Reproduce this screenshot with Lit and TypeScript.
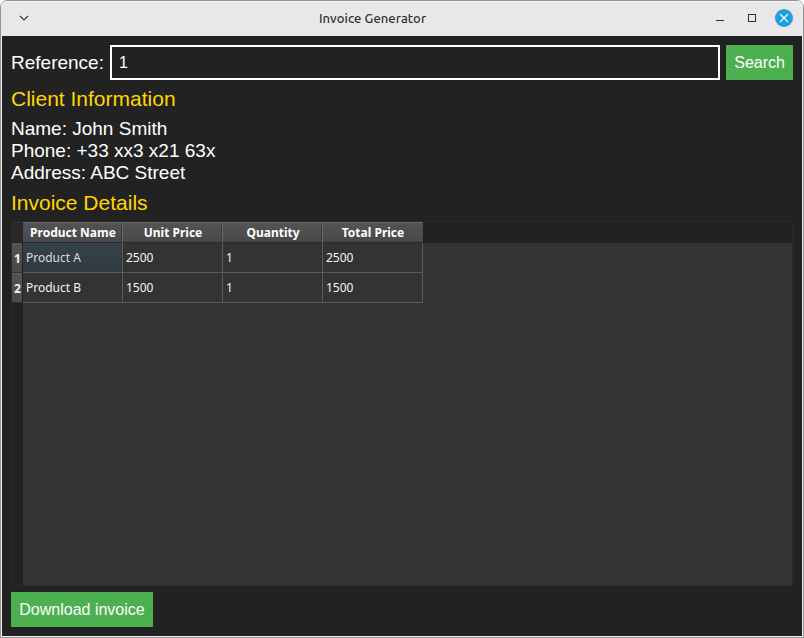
import { LitElement, html, css } from "lit";
import { customElement, state } from "lit/decorators.js";

interface InvoiceLine {
  name: string;
  price: number;
  quantity: number;
}

@customElement("title-bar")
class TitleBar extends LitElement {
  static styles = css`
    :host {
      display: grid;
      grid-template-columns: 104px 1fr 104px;
      align-items: center;
      height: 35px;
      box-sizing: border-box;
      padding-bottom: 2px;
      background: #e8e8e8;
      color: #303030;
      border-top: 1px solid #f8f8f8;
      border-radius: 6px 6px 0 0;
    }
    .menu {
      display: block;
      margin-left: 17px;
    }
    .title {
      text-align: center;
      font: 500 13px/18px Ubuntu, "Noto Sans", sans-serif;
      letter-spacing: 0.08px;
      margin-left: -59px;
      white-space: nowrap;
    }
    .buttons {
      display: block;
      margin-left: 5px;
    }
  `;

  render() {
    return html`
      <svg class="menu" width="12" height="12" viewBox="0 0 12 12" fill="none" stroke="#3a3a3a" stroke-width="1.2">
        <path d="M2 4l4 4 4-4" />
      </svg>
      <div class="title">Invoice Generator</div>
      <svg class="buttons" width="90" height="20" viewBox="0 0 90 20" fill="none">
        <path d="M12 12.5h8" stroke="#303030" />
        <rect x="44.5" y="6.5" width="7" height="7" stroke="#303030" />
        <circle cx="80" cy="10" r="9" fill="#1f9ede" />
        <path d="M76 6l8 8M84 6l-8 8" stroke="#fff" stroke-width="1.1" />
      </svg>
    `;
  }
}

@customElement("invoice-table")
class InvoiceTable extends LitElement {
  static properties = { lines: { attribute: false } };
  declare lines: InvoiceLine[];

  static styles = css`
    :host {
      display: block;
      box-sizing: border-box;
      border: 1px solid #292929;
      background: linear-gradient(90deg, #222 11px, #333 11px);
      font: 12px/17px "Noto Sans", sans-serif;
      color: #f4f4f4;
    }
    .head,
    .row {
      display: grid;
      grid-template-columns: 11px repeat(4, 100px);
    }
    .head {
      height: 21px;
      background: #222;
    }
    .corner {
      box-sizing: border-box;
      height: 21px;
      background: #292929;
      border-bottom: 1px solid #222;
      border-top: 1px solid #303030;
    }
    .column {
      box-sizing: border-box;
      height: 21px;
      padding: 1px 0 0 1px;
      text-align: center;
      font-weight: bold;
      color: #fff;
      background: linear-gradient(#535353, #484848);
      border-top: 1px solid #656565;
      border-right: 1px solid #666;
      border-bottom: 1px solid #2c2c2c;
      box-shadow: inset -1px 0 #3e3e3e;
      white-space: nowrap;
    }
    .column:last-child {
      border-right-color: #4a4a4a;
      box-shadow: none;
    }
    .row {
      height: 30px;
    }
    .number {
      box-sizing: border-box;
      width: 10px;
      padding: 6px 0 0 1px;
      text-align: center;
      font-weight: bold;
      background: linear-gradient(#535353, #494949);
      border-bottom: 1px solid #303030;
      border-top: 1px solid #5b5b5b;
    }
    .cell {
      box-sizing: border-box;
      padding: 6px 0 0 3px;
      border-right: 1px solid #5b5b5b;
      border-bottom: 1px solid #5b5b5b;
      background: #333;
    }
    .current {
      background: linear-gradient(#34424b, #303a40);
      color: #d8dcde;
    }
  `;

  render() {
    const titles = ["Product Name", "Unit Price", "Quantity", "Total Price"];
    return html`
      <div class="head">
        <div class="corner"></div>
        ${titles.map((title) => html`<div class="column">${title}</div>`)}
      </div>
      ${this.lines.map(
        (line, i) => html`
          <div class="row">
            <div class="number">${i + 1}</div>
            <div class="cell ${i === 0 ? "current" : ""}">${line.name}</div>
            <div class="cell">${line.price}</div>
            <div class="cell">${line.quantity}</div>
            <div class="cell">${line.price * line.quantity}</div>
          </div>
        `
      )}
    `;
  }
}

@customElement("app-root")
class AppRoot extends LitElement {
  @state() private lines: InvoiceLine[] = [
    { name: "Product A", price: 2500, quantity: 1 },
    { name: "Product B", price: 1500, quantity: 1 },
  ];

  static styles = css`
    :host {
      display: block;
      height: 638px;
      background: #fff;
    }
    .window {
      box-sizing: border-box;
      height: 638px;
      display: flex;
      flex-direction: column;
      border: 1px solid #949494;
      border-radius: 7px 7px 0 0;
      background: #f4f4f4;
    }
    title-bar {
      flex: none;
    }
    .body {
      box-sizing: border-box;
      flex: 1;
      margin: 0 1px 1px;
      padding: 9px 9px;
      display: flex;
      flex-direction: column;
      background: #222;
      color: #fff;
      font: 19px/22px "Liberation Sans", Arial, sans-serif;
    }
    .search {
      display: flex;
      align-items: center;
      gap: 6px;
      height: 35px;
    }
    .field {
      box-sizing: border-box;
      flex: 1;
      min-width: 0;
      height: 35px;
      padding: 0 7px;
      border: 2px solid #fff;
      background: #222;
      color: #fff;
      font: 16px/18px "Liberation Sans", Arial, sans-serif;
      outline: none;
      border-radius: 0;
    }
    .button {
      box-sizing: border-box;
      height: 35px;
      padding: 0 8px;
      border: 0;
      background: #4caf50;
      color: #fff;
      font: 16px/18px "Liberation Sans", Arial, sans-serif;
    }
    .heading {
      font-size: 21px;
      line-height: 24px;
      color: #ffd700;
    }
    .client {
      margin-top: 7px;
    }
    .details {
      margin: 7px 0 5px;
    }
    .info {
      padding-top: 7px;
    }
    invoice-table {
      flex: 1;
      margin: 1px 0 6px;
    }
    .download {
      align-self: flex-start;
      flex: none;
      width: 142px;
      white-space: nowrap;
    }
  `;

  render() {
    return html`
      <div class="window">
        <title-bar></title-bar>
        <div class="body">
          <div class="search">
            <span>Reference:</span>
            <input class="field" value="1" />
            <button class="button">Search</button>
          </div>
          <div class="heading client">Client Information</div>
          <div class="info">
            <div>Name: John Smith</div>
            <div>Phone: +33 xx3 x21 63x</div>
            <div>Address: ABC Street</div>
          </div>
          <div class="heading details">Invoice Details</div>
          <invoice-table .lines=${this.lines}></invoice-table>
          <button class="button download">Download invoice</button>
        </div>
      </div>
    `;
  }
}
